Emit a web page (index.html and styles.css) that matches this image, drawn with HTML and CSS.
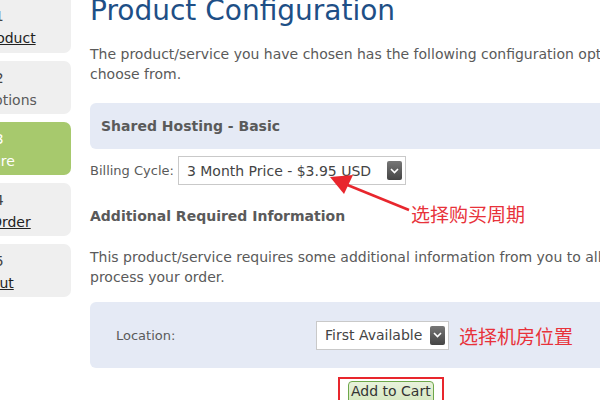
FILE: index.html
```html
<!DOCTYPE html>
<html>
  <head>
    <title>Product Configuration</title>
    <link rel="stylesheet" href="styles.css">
  </head>
  <body>
    <div class="page">
      <!-- Các bước đặt hàng -->
      <div class="steps">
        <div class="step">
          <div class="num">Step 1</div>
          <a class="label" href="#">Choose Product</a>
        </div>
        <div class="step">
          <div class="num">Step 2</div>
          <span class="label">Product Options</span>
        </div>
        <div class="step active">
          <div class="num">Step 3</div>
          <span class="label">Configure</span>
        </div>
        <div class="step">
          <div class="num">Step 4</div>
          <a class="label" href="#">Confirm Order</a>
        </div>
        <div class="step">
          <div class="num">Step 5</div>
          <a class="label" href="#">Checkout</a>
        </div>
      </div>

      <div class="main">
        <h1>Product Configuration</h1>
        <p class="intro">
          The product/service you have chosen has the following configuration options for you to<br>
          choose from.
        </p>

        <div class="product-box">Shared Hosting - Basic</div>

        <div class="billing">
          <span class="field-name">Billing Cycle:</span>
          <div class="fake-select cycle">
            <span>3 Month Price - $3.95 USD</span>
            <span class="caret"><svg width="9" height="6" viewBox="0 0 9 6"><path d="M1 1 L4.5 4.5 L8 1" fill="none" stroke="#fff" stroke-width="1.6"/></svg></span>
          </div>
        </div>

        <h3>Additional Required Information</h3>
        <p class="intro">
          This product/service requires some additional information from you to allow us to<br>
          process your order.
        </p>

        <div class="fields-box">
          <span class="field-name field-label">Location:</span>
          <div class="fake-select loc">
            <span>First Available</span>
            <span class="caret"><svg width="9" height="6" viewBox="0 0 9 6"><path d="M1 1 L4.5 4.5 L8 1" fill="none" stroke="#fff" stroke-width="1.6"/></svg></span>
          </div>
          <span class="note">选择机房位置</span>
        </div>

        <div class="actions">
          <span class="mark"><button type="button">Add to Cart</button></span>
        </div>
      </div>

      <!-- Chú thích -->
      <span class="note note-cycle">选择购买周期</span>
      <svg class="arrow" width="600" height="400" viewBox="0 0 600 400">
        <line x1="409" y1="210" x2="345" y2="184" stroke="#e8262d" stroke-width="2.5"/>
        <polygon points="330,177 353,175 344,194" fill="#e8262d"/>
      </svg>
    </div>
  </body>
</html>
```

FILE: styles.css
```css
body {
  margin: 0;
  overflow: hidden;
  font-family: "DejaVu Sans", Verdana, sans-serif;
  font-size: 14px;
  color: #5a5a5a;
}
.page {
  position: relative;
  display: flex;
  gap: 19px;
  width: 600px;
  height: 400px;
  overflow: hidden;
}
.steps {
  flex: 0 0 180px;
  margin-left: -109px;
  margin-top: -6px;
  display: flex;
  flex-direction: column;
  gap: 8px;
}
.step {
  height: 59px;
  box-sizing: border-box;
  padding-top: 11px;
  background: #efefef;
  border-radius: 7px;
  text-align: center;
  line-height: 22px;
}
.step + .step {
  height: 53px;
  padding-top: 6px;
}
.step .num {
  color: #444;
}
.step a.label {
  color: #222;
}
.step.active {
  background: #a7c96d;
  color: #fff;
}
.step.active .num {
  color: #fff;
}
.main {
  flex: 0 0 680px;
}
h1 {
  margin: -6px 0 16px;
  font-size: 28px;
  font-weight: normal;
  line-height: 34px;
  color: #1e4f86;
}
.intro {
  margin: 0;
  line-height: 20px;
  white-space: nowrap;
}
.product-box {
  margin-top: 19px;
  height: 46px;
  padding-left: 11px;
  line-height: 46px;
  background: #e5eaf5;
  border-radius: 6px;
  font-weight: bold;
}
.billing {
  display: flex;
  align-items: center;
  gap: 4px;
  margin-top: 7px;
}
.field-name {
  font-size: 13px;
}
.fake-select {
  display: flex;
  align-items: center;
  justify-content: space-between;
  box-sizing: border-box;
  height: 29px;
  padding: 0 3px 0 8px;
  background: #fff;
  border: 1px solid #c9c9c9;
  color: #444;
}
.fake-select.cycle {
  width: 228px;
}
.fake-select.loc {
  width: 133px;
}
.caret {
  display: flex;
  align-items: center;
  justify-content: center;
  width: 15px;
  height: 19px;
  background: linear-gradient(#777, #444);
  border-radius: 2px;
}
h3 {
  margin: 19px 0 19px;
  font-size: 14px;
  line-height: 24px;
}
.fields-box {
  display: flex;
  align-items: center;
  margin-top: 15px;
  height: 66px;
  padding-left: 26px;
  background: #e5eaf5;
  border-radius: 6px;
}
.field-label {
  width: 200px;
}
.note {
  font-family: "Noto Sans CJK SC", sans-serif;
  font-size: 19px;
  color: #e8323a;
}
.fields-box .note {
  margin-left: 10px;
}
.actions {
  margin-top: 9px;
  padding-left: 248px;
}
.mark {
  display: inline-block;
  padding: 2px 8px 0;
  border: 2px solid #e8262d;
  border-bottom: 0;
}
button {
  font: inherit;
  color: #333;
  padding: 1px 2px 6px;
  background: linear-gradient(#e8f2dc, #d3e6bd);
  border: 1px solid #6ea84a;
  border-radius: 4px;
}
.note-cycle {
  position: absolute;
  left: 411px;
  top: 200px;
}
.arrow {
  position: absolute;
  left: 0;
  top: 0;
  pointer-events: none;
}
```
